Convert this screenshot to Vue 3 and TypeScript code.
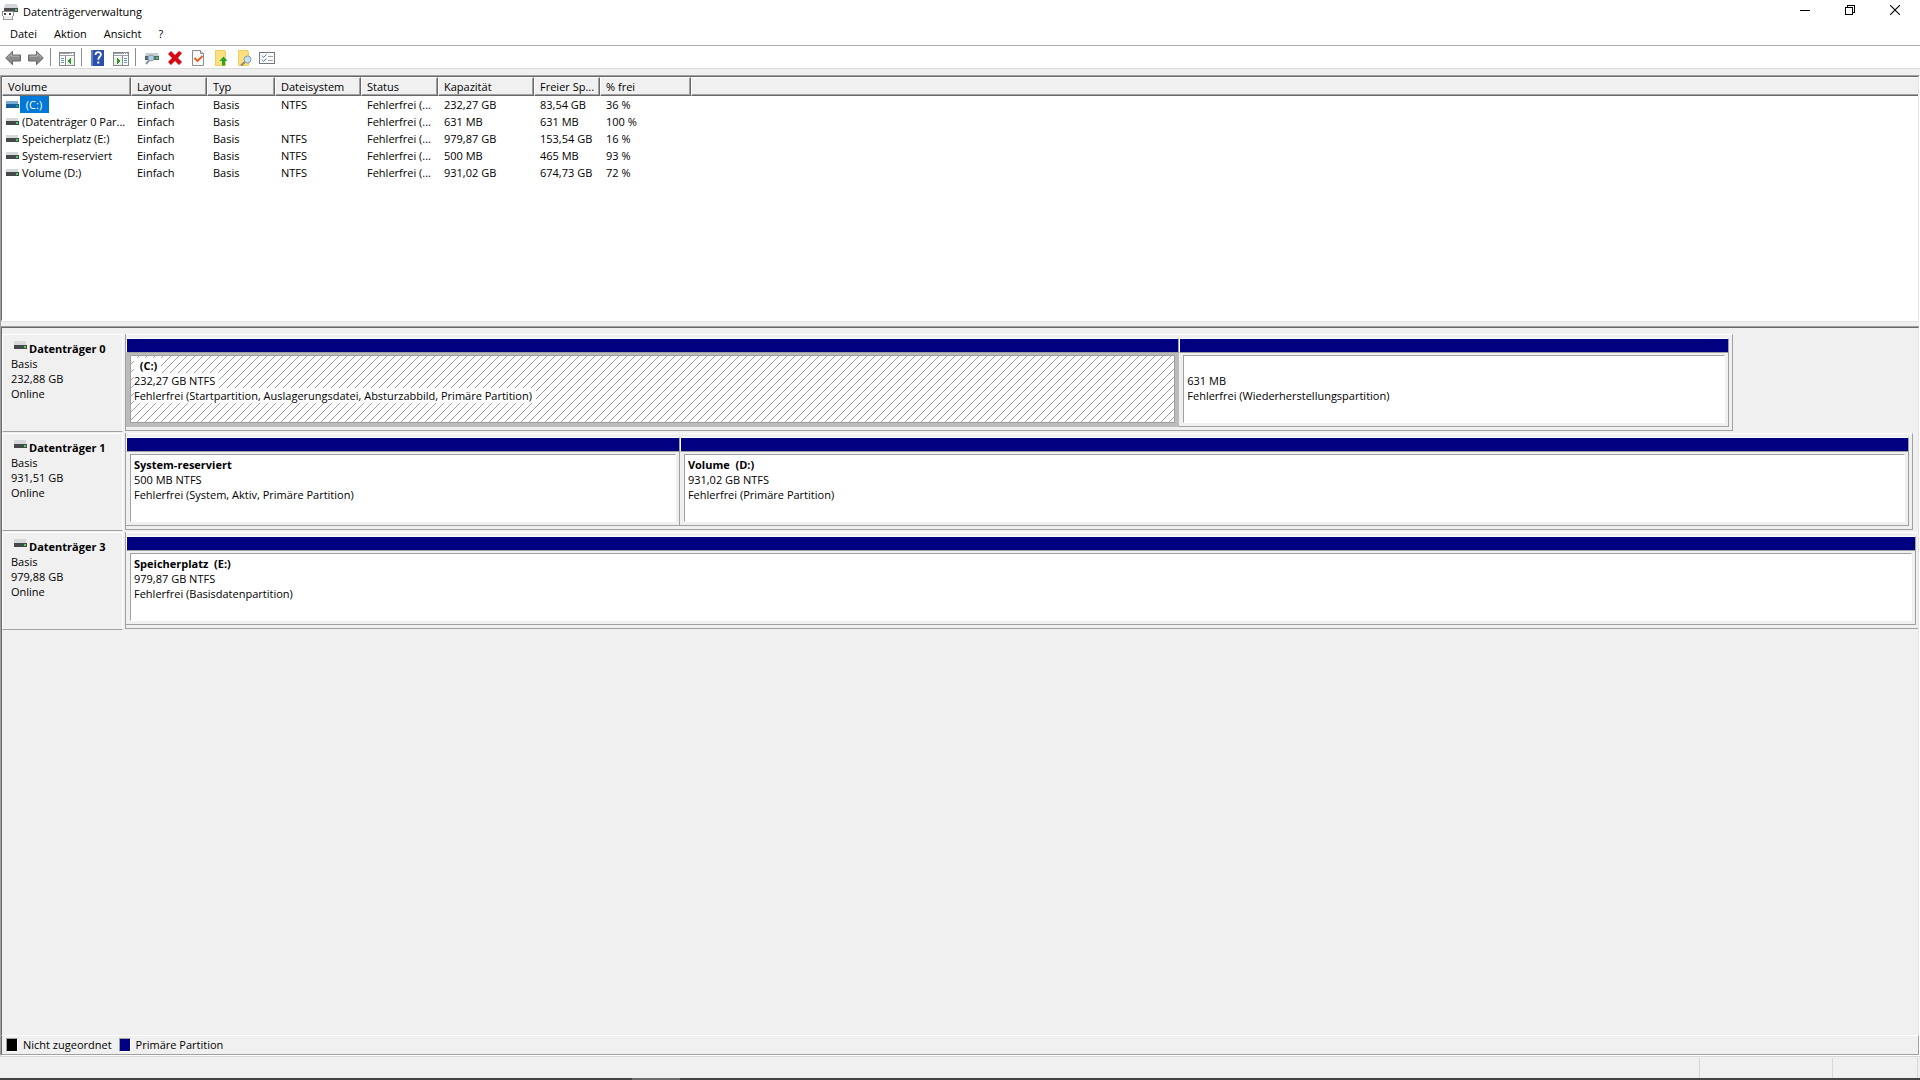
<script setup lang="ts">
interface Volume {
  name: string
  fs: string
  capacity: string
  free: string
  percent: string
}

interface Partition {
  label: string
  size: string
  state: string
  share: number
  selected?: boolean
}

interface Disk {
  name: string
  size: string
  width: number
  partitions: Partition[]
}

const columns = ['Volume', 'Layout', 'Typ', 'Dateisystem', 'Status', 'Kapazität', 'Freier Sp...', '% frei', '']

const volumes: Volume[] = [
  { name: ' (C:)', fs: 'NTFS', capacity: '232,27 GB', free: '83,54 GB', percent: '36 %' },
  { name: '(Datenträger 0 Par...', fs: '', capacity: '631 MB', free: '631 MB', percent: '100 %' },
  { name: 'Speicherplatz (E:)', fs: 'NTFS', capacity: '979,87 GB', free: '153,54 GB', percent: '16 %' },
  { name: 'System-reserviert', fs: 'NTFS', capacity: '500 MB', free: '465 MB', percent: '93 %' },
  { name: 'Volume (D:)', fs: 'NTFS', capacity: '931,02 GB', free: '674,73 GB', percent: '72 %' },
]

const disks: Disk[] = [
  {
    name: 'Datenträger 0',
    size: '232,88 GB',
    width: 89.7,
    partitions: [
      {
        label: '  (C:)',
        size: '232,27 GB NTFS',
        state: 'Fehlerfrei (Startpartition, Auslagerungsdatei, Absturzabbild, Primäre Partition)',
        share: 1053,
        selected: true,
      },
      { label: ' ', size: '631 MB', state: 'Fehlerfrei (Wiederherstellungspartition)', share: 550 },
    ],
  },
  {
    name: 'Datenträger 1',
    size: '931,51 GB',
    width: 99.7,
    partitions: [
      { label: 'System-reserviert', size: '500 MB NTFS', state: 'Fehlerfrei (System, Aktiv, Primäre Partition)', share: 554 },
      { label: 'Volume  (D:)', size: '931,02 GB NTFS', state: 'Fehlerfrei (Primäre Partition)', share: 1229 },
    ],
  },
  {
    name: 'Datenträger 3',
    size: '979,88 GB',
    width: 100.1,
    partitions: [
      { label: 'Speicherplatz  (E:)', size: '979,87 GB NTFS', state: 'Fehlerfrei (Basisdatenpartition)', share: 1 },
    ],
  },
]
</script>

<template>
  <div class="window">
    <header class="titlebar">
      <svg class="app-icon" viewBox="0 0 16 16" shape-rendering="crispEdges">
        <path d="M3 0h12l1 4H2z" fill="#d3d6d9" />
        <rect x="2" y="4" width="14" height="4" fill="#4a4d50" />
        <rect x="13" y="5" width="2" height="2" fill="#4fd06a" />
        <rect x="0" y="7" width="12" height="5" fill="#8b8b8b" />
        <rect x="1" y="8" width="10" height="4" fill="#fff" />
        <rect x="2" y="9" width="2" height="2" fill="#4a4a4a" />
        <rect x="7" y="9" width="2" height="2" fill="#4a4a4a" />
        <rect x="1" y="12" width="10" height="4" fill="#9b9b9b" />
        <rect x="2" y="12" width="8" height="3" fill="#efefef" />
      </svg>
      <h1>Datenträgerverwaltung</h1>
      <div class="window-buttons">
        <button type="button" aria-label="Minimieren">
          <svg viewBox="0 0 10 10" shape-rendering="crispEdges"><path d="M0 5.500h10" stroke="#000" /></svg>
        </button>
        <button type="button" aria-label="Verkleinern">
          <svg viewBox="0 0 10 10" shape-rendering="crispEdges" fill="none" stroke="#000">
            <path d="M.5 2.500h7v7h-7zM2.500 2.500v-2h7v7h-2" />
          </svg>
        </button>
        <button type="button" aria-label="Schließen">
          <svg viewBox="0 0 10 10"><path d="M0 0l10 10M10 0L0 10" stroke="#000" stroke-width="1.100" /></svg>
        </button>
      </div>
    </header>

    <nav class="menubar">
      <button type="button">Datei</button>
      <button type="button">Aktion</button>
      <button type="button">Ansicht</button>
      <button type="button">?</button>
    </nav>

    <div class="toolbar" role="toolbar">
      <button type="button" aria-label="Zurück">
        <svg viewBox="0 0 16 16">
          <path d="M.7 8L7.500 1.300V5h8v6h-8v3.700z" fill="#8a8a8a" stroke="#666" />
          <path d="M2.500 7.600L6.600 3.800v2.400h7.800" fill="none" stroke="#b8b8b8" />
        </svg>
      </button>
      <button type="button" aria-label="Vorwärts">
        <svg viewBox="0 0 16 16">
          <path d="M15.300 8L8.500 1.300V5h-8v6h8v3.700z" fill="#8a8a8a" stroke="#666" />
          <path d="M13.500 7.600L9.400 3.800v2.400H1.600" fill="none" stroke="#b8b8b8" />
        </svg>
      </button>
      <span class="sep"></span>
      <button type="button" aria-label="Konsolenstruktur">
        <svg viewBox="0 0 16 16" shape-rendering="crispEdges">
          <rect x=".5" y="2.500" width="15" height="13" fill="#fff" stroke="#84898f" />
          <path d="M1 3.500h14M1 5.500h14" stroke="#9aa0a6" />
          <path d="M11 3.500h1M13 3.500h1" stroke="#fff" />
          <path d="M6.500 6v9" stroke="#84898f" />
          <path d="M2 8.500h3M2 10.500h3M2 12.500h3" stroke="#5d8fc9" />
          <rect x="8" y="7" width="7" height="8" fill="#f0f0f0" />
          <path d="M12 8v6l-4-3z" fill="#2a9d20" />
        </svg>
      </button>
      <span class="sep"></span>
      <button type="button" aria-label="Hilfe">
        <svg viewBox="0 0 16 16">
          <rect x="1" width="13" height="16" fill="#2c4fae" />
          <rect x="1" width="2" height="16" fill="#5c7fd8" />
          <path d="M5.500 5c0-4 5.700-3.700 5.400-.3-.2 2-2.600 2.200-2.600 5" fill="none" stroke="#fff" stroke-width="1.800" />
          <rect x="7.300" y="11.500" width="2" height="2" fill="#fff" />
        </svg>
      </button>
      <button type="button" aria-label="Aktionsbereich">
        <svg viewBox="0 0 16 16" shape-rendering="crispEdges">
          <rect x=".5" y="2.500" width="15" height="13" fill="#fff" stroke="#84898f" />
          <path d="M1 3.500h14M1 5.500h14" stroke="#9aa0a6" />
          <path d="M11 3.500h1M13 3.500h1" stroke="#fff" />
          <path d="M9.500 6v9" stroke="#84898f" />
          <path d="M11 8.500h3M11 10.500h3M11 12.500h3" stroke="#5d8fc9" />
          <rect x="1" y="7" width="8" height="8" fill="#f0f0f0" />
          <path d="M4 8v6l4-3z" fill="#2a9d20" />
        </svg>
      </button>
      <span class="sep"></span>
      <button type="button" aria-label="Datenträger neu einlesen">
        <svg viewBox="0 0 16 16">
          <path d="M2 3h12l1 3H1z" fill="#c9cdd0" />
          <rect x="1" y="6" width="14" height="4" fill="#59626a" />
          <rect x="12" y="7" width="2" height="2" fill="#36dc55" />
          <path d="M5 10.500L2 14" stroke="#8b959d" stroke-width="2" />
          <circle cx="7" cy="8" r="3" fill="#a8cfe5" stroke="#8b9dac" />
        </svg>
      </button>
      <button type="button" aria-label="Löschen">
        <svg viewBox="0 0 16 16">
          <path d="M1 4l3-3 4 4 4-4 3 2-4 5 4 4-3 3-4-4-4 4-3-3 4-4z" fill="#d70a14" />
        </svg>
      </button>
      <button type="button" aria-label="Eigenschaften">
        <svg viewBox="0 0 16 16">
          <path d="M2.500.5h8l3 3v12h-11z" fill="#f8f8f8" stroke="#8d8d8d" />
          <path d="M10.500.5v3h3" fill="#ddd" stroke="#8d8d8d" />
          <path d="M4.500 8l3 3 5-5" fill="none" stroke="#e75a20" stroke-width="1.800" />
        </svg>
      </button>
      <button type="button" aria-label="Übergeordneter Ordner">
        <svg viewBox="0 0 16 16">
          <path d="M2 0h10l1 2v14H2z" fill="#fbe07f" />
          <path d="M2.500.5h9v1.500h1v13.500h-10z" fill="none" stroke="#efcf62" />
          <path d="M10.500 6.500l4 4.500h-2.500v4.500h-3V11H6.500z" fill="#29a329" />
        </svg>
      </button>
      <button type="button" aria-label="Suchen">
        <svg viewBox="0 0 16 16">
          <path d="M2 0h10l1 2v14H2z" fill="#fbe07f" />
          <path d="M2.500.5h9v1.500h1v13.500h-10z" fill="none" stroke="#efcf62" />
          <path d="M9 12l-4 3.500" stroke="#8d8370" stroke-width="2" />
          <circle cx="11.500" cy="9.500" r="3.500" fill="#c5e3f4" stroke="#8a9aa6" />
        </svg>
      </button>
      <button type="button" aria-label="Optionen">
        <svg viewBox="0 0 16 16" shape-rendering="crispEdges">
          <rect x=".5" y="2.500" width="15" height="11" fill="#fff" stroke="#74797f" />
          <path d="M9 6.500h5M9 10.500h5" stroke="#a4a4a4" />
          <path d="M3 5.500l1.500 2 3-3M3 9.500l1.500 2 3-3" fill="none" stroke="#3f82c8" shape-rendering="auto" />
        </svg>
      </button>
    </div>

    <main class="console">
      <section class="volume-pane">
        <table>
          <colgroup>
            <col v-for="(c, i) in columns" :key="i" :class="'col-' + i" />
          </colgroup>
          <thead>
            <tr>
              <th v-for="(c, i) in columns" :key="i">{{ c }}</th>
            </tr>
          </thead>
          <tbody>
            <tr v-for="(v, i) in volumes" :key="v.name" :class="{ active: i === 0 }">
              <td class="name">
                <span class="name-cell">
                  <svg class="drive" viewBox="0 0 14 9" shape-rendering="crispEdges">
                    <path d="M1 1h12v3H1z" :fill="i === 0 ? '#79aed9' : '#d6d8da'" />
                    <rect y="4" x="1" width="13" height="4" :fill="i === 0 ? '#17609b' : '#46494c'" />
                    <rect x="11" y="5" width="2" height="2" :fill="i === 0 ? '#1fa487' : '#46d95c'" />
                  </svg>
                  <span class="label">{{ v.name }}</span>
                </span>
              </td>
              <td>Einfach</td>
              <td>Basis</td>
              <td>{{ v.fs }}</td>
              <td>Fehlerfrei (...</td>
              <td>{{ v.capacity }}</td>
              <td>{{ v.free }}</td>
              <td>{{ v.percent }}</td>
              <td></td>
            </tr>
          </tbody>
        </table>
      </section>

      <div class="splitter"></div>

      <section class="disk-pane">
        <article v-for="d in disks" :key="d.name" class="disk">
          <div class="disk-info">
            <h2>
              <svg class="drive" viewBox="0 0 14 9" shape-rendering="crispEdges">
                <path d="M1 0h12v4H1z" fill="#d6d8da" />
                <rect x="1" y="4" width="13" height="4" fill="#46494c" />
                <rect x="11" y="5" width="2" height="2" fill="#46d95c" />
              </svg>
              {{ d.name }}
            </h2>
            <p>Basis</p>
            <p>{{ d.size }}</p>
            <p>Online</p>
          </div>
          <div class="disk-track">
            <div class="partitions" :style="{ width: d.width + '%' }">
              <div
                v-for="p in d.partitions"
                :key="p.size"
                class="partition"
                :class="{ selected: p.selected }"
                :style="{ flexGrow: p.share }"
              >
                <div class="stripe"></div>
                <div class="body">
                  <div class="inner">
                    <p><b>{{ p.label }}</b></p>
                    <p><span>{{ p.size }}</span></p>
                    <p><span>{{ p.state }}</span></p>
                  </div>
                </div>
              </div>
            </div>
          </div>
        </article>
      </section>

      <footer class="legend">
        <span class="swatch unallocated"></span>
        <span>Nicht zugeordnet</span>
        <span class="swatch primary"></span>
        <span>Primäre Partition</span>
      </footer>
    </main>

    <div class="statusbar">
      <span class="fill"></span>
      <span class="field wide"></span>
      <span class="field"></span>
    </div>
    <div class="taskbar-edge"><span></span></div>
  </div>
</template>

<style>
body {
  margin: 0;
  background: #f0f0f0;
}
</style>

<style scoped>
.window {
  display: flex;
  flex-direction: column;
  min-height: 100vh;
  background: #f0f0f0;
  color: #000;
  font-family: 'Open Sans', 'Noto Sans', sans-serif;
  font-size: 11px;
  line-height: 15px;
}

button {
  padding: 0;
  border: 0;
  background: none;
  font: inherit;
  color: inherit;
}

h1,
h2,
p {
  margin: 0;
  font-size: 11px;
  font-weight: 400;
}

svg {
  display: block;
  flex: none;
}

.titlebar {
  display: flex;
  align-items: center;
  height: 23px;
  padding-left: 2px;
  background: #fff;
}

.app-icon {
  width: 16px;
  height: 16px;
  margin-right: 5px;
}

.window-buttons {
  display: flex;
  margin-right: 3px;
  margin-left: auto;
}

.window-buttons button {
  display: flex;
  align-items: center;
  justify-content: center;
  width: 45px;
  height: 20px;
  margin-bottom: 3px;
}

.window-buttons svg {
  width: 10px;
  height: 10px;
}

.menubar {
  display: flex;
  gap: 17px;
  height: 20px;
  padding: 0 0 2px 10px;
  background: #fff;
  border-bottom: 1px solid #ababb0;
}

.toolbar {
  display: flex;
  align-items: center;
  height: 22px;
  padding-left: 1px;
  background: #fff;
  border-bottom: 1px solid #dadada;
}

.toolbar button {
  width: 23px;
  padding: 2px 3px 0 4px;
}

.toolbar svg {
  width: 16px;
  height: 16px;
}

.sep {
  width: 1px;
  height: 18px;
  margin: 0 4px 0 3px;
  background: #8c8c8c;
}

.console {
  display: flex;
  flex: 1;
  flex-direction: column;
  margin-top: 6px;
  border: 1px solid;
  border-color: #a0a0a0 #fff #fff #a0a0a0;
}

.volume-pane {
  height: 243px;
  background: #fff;
  border: 1px solid;
  border-color: #696969 #e3e3e3 #fff #696969;
}

table {
  width: 100%;
  table-layout: fixed;
  border-collapse: separate;
  border-spacing: 0;
}

.col-0 { width: 129px; }
.col-1 { width: 76px; }
.col-2 { width: 68px; }
.col-3 { width: 86px; }
.col-4 { width: 77px; }
.col-5 { width: 96px; }
.col-6 { width: 66px; }
.col-7 { width: 91px; }

th,
td {
  height: 17px;
  padding: 0 0 0 6px;
  line-height: 17px;
  text-align: left;
  font-weight: 400;
  white-space: nowrap;
}

th {
  padding-left: 5px;
  background: #f0f0f0;
  border: 1px solid;
  border-color: #fff #696969 #696969 #fff;
  box-shadow: inset -1px -1px #a0a0a0;
}

th:last-child {
  border-right: 0;
  box-shadow: inset 0 -1px #a0a0a0;
}

td.name {
  padding: 0;
}

.name-cell {
  display: flex;
  align-items: center;
  height: 17px;
  padding-left: 3px;
}

.drive {
  width: 14px;
  height: 9px;
}

.label {
  margin-left: 1px;
  padding: 0 6px 0 2px;
  white-space: pre;
}

.active .label {
  padding: 0 7px 0 3px;
  color: #fff;
  background: #0078d7;
}

.splitter {
  height: 4px;
  background: #f0f0f0;
  border-top: 1px solid #e3e3e3;
  border-bottom: 1px solid #a0a0a0;
}

.disk-pane {
  flex: 1;
  padding-top: 6px;
  border-top: 1px solid #696969;
  border-left: 1px solid #696969;
  border-right: 1px solid #e3e3e3;
}

.disk {
  display: flex;
  height: 99px;
}

.disk-info {
  box-sizing: border-box;
  width: 121px;
  height: 98px;
  padding: 6px 0 0 8px;
  border: 1px solid;
  border-color: #fff #fff #a0a0a0 #fff;
}

h2 {
  display: flex;
  gap: 2px;
  padding-left: 2px;
  font-weight: 700;
}

.disk-track {
  flex: 1;
  height: 97px;
  margin-left: 2px;
  overflow: hidden;
  border-left: 1px solid #a0a0a0;
}

.partitions {
  box-sizing: border-box;
  display: flex;
  height: 97px;
  padding: 3px 3px 3px 0;
  border: 1px solid;
  border-color: #fff #a0a0a0 #a0a0a0;
  border-left: 0;
}

.partition {
  display: flex;
  flex: 1 1 0;
  flex-direction: column;
  min-width: 0;
}

.stripe {
  height: 13px;
  background: #000080;
  border: 1px solid;
  border-color: #fff #a0a0a0 #a0a0a0 #fff;
}

.body {
  flex: 1;
  padding: 2px 3px 3px 4px;
  border-right: 1px solid #a0a0a0;
  border-bottom: 1px solid #a0a0a0;
}

.inner {
  box-sizing: border-box;
  height: 100%;
  padding: 2px 0 0 3px;
  background: #fff;
  border: 1px solid;
  border-color: #a0a0a0 #fff #fff #a0a0a0;
}

.inner p {
  height: 15px;
  white-space: pre;
}

.selected .body {
  background: #bcbcbc;
  border-color: #bcbcbc;
}

.selected .inner {
  background: #fff url("data:image/svg+xml,%3Csvg xmlns='http://www.w3.org/2000/svg' width='8' height='8' shape-rendering='crispEdges'%3E%3Cpath d='M0 7.500h1M1 6.500h1M2 5.500h1M3 4.500h1M4 3.500h1M5 2.500h1M6 1.500h1M7 .5h1' stroke='%23a0a0a0'/%3E%3C/svg%3E");
  border-color: #a0a0a0;
}

.selected .inner b,
.selected .inner span {
  display: inline-block;
  padding-right: 4px;
  background: #fff;
}

.legend {
  display: flex;
  align-items: center;
  height: 17px;
  padding: 0 0 1px 4px;
  border: 1px solid;
  border-color: #fff #a0a0a0 #a0a0a0 #696969;
}

.swatch {
  box-sizing: border-box;
  width: 12px;
  height: 14px;
  margin-right: 5px;
  border: 1px solid;
  border-color: #a0a0a0 #fff #fff #a0a0a0;
}

.unallocated { background: #000; }
.primary { background: #000080; margin-left: 7px; }

.statusbar {
  display: flex;
  height: 20px;
  padding: 1px 2px 0 0;
  border-top: 1px solid #d7d7d7;
}

.fill { flex: 1; }

.field {
  width: 84px;
  border-left: 1px solid #d7d7d7;
}

.field + .field { border-right: 1px solid #d7d7d7; }
.wide { width: 132px; }

.taskbar-edge {
  height: 2px;
  padding-left: 632px;
  background: #434343;
}

.taskbar-edge span {
  display: block;
  width: 48px;
  height: 2px;
  background: #6b6b6b;
}
</style>
